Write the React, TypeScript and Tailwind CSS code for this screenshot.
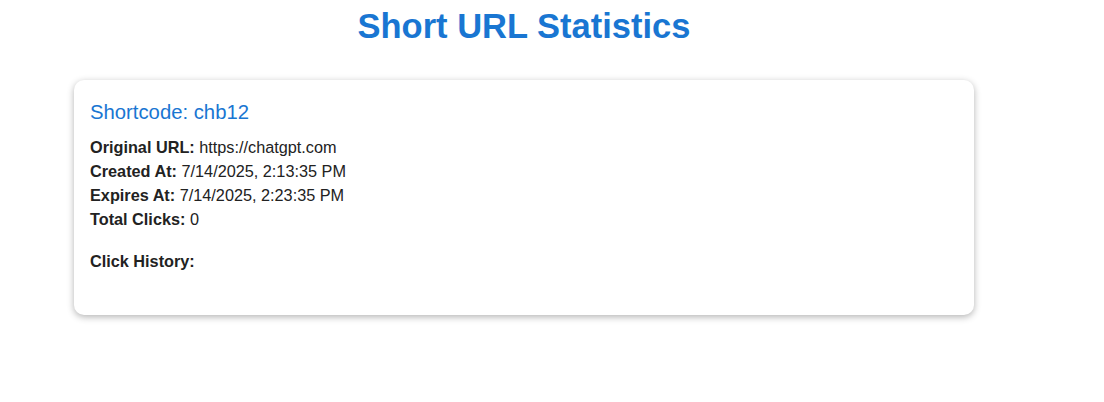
export default function App() {
  return (
    <div className="min-h-[402px] bg-white font-['Liberation_Sans',Arial,sans-serif] text-[#222]">
      <div className="ml-[74px] w-[900px]">
        <h1 className="pt-[6px] text-center text-[34.5px] font-bold leading-[40px] text-[#1976d2]">
          Short URL Statistics
        </h1>
        <div className="mt-[34px] h-[235px] rounded-[10px] bg-white px-4 pt-[20px] shadow-[0_2px_7px_rgba(0,0,0,0.3)]">
          <h3 className="text-[20.3px] leading-[24px] text-[#1976d2]">Shortcode: chb12</h3>
          <div className="mt-[11px] text-[16.25px] leading-[24px]">
            <p>
              <strong>Original URL:</strong> https://chatgpt.com
            </p>
            <p>
              <strong>Created At:</strong> 7/14/2025, 2:13:35 PM
            </p>
            <p>
              <strong>Expires At:</strong> 7/14/2025, 2:23:35 PM
            </p>
            <p>
              <strong>Total Clicks:</strong> 0
            </p>
          </div>
          <p className="mt-[18px] text-[16.25px] font-bold leading-[24px]">Click History:</p>
        </div>
      </div>
    </div>
  );
}
